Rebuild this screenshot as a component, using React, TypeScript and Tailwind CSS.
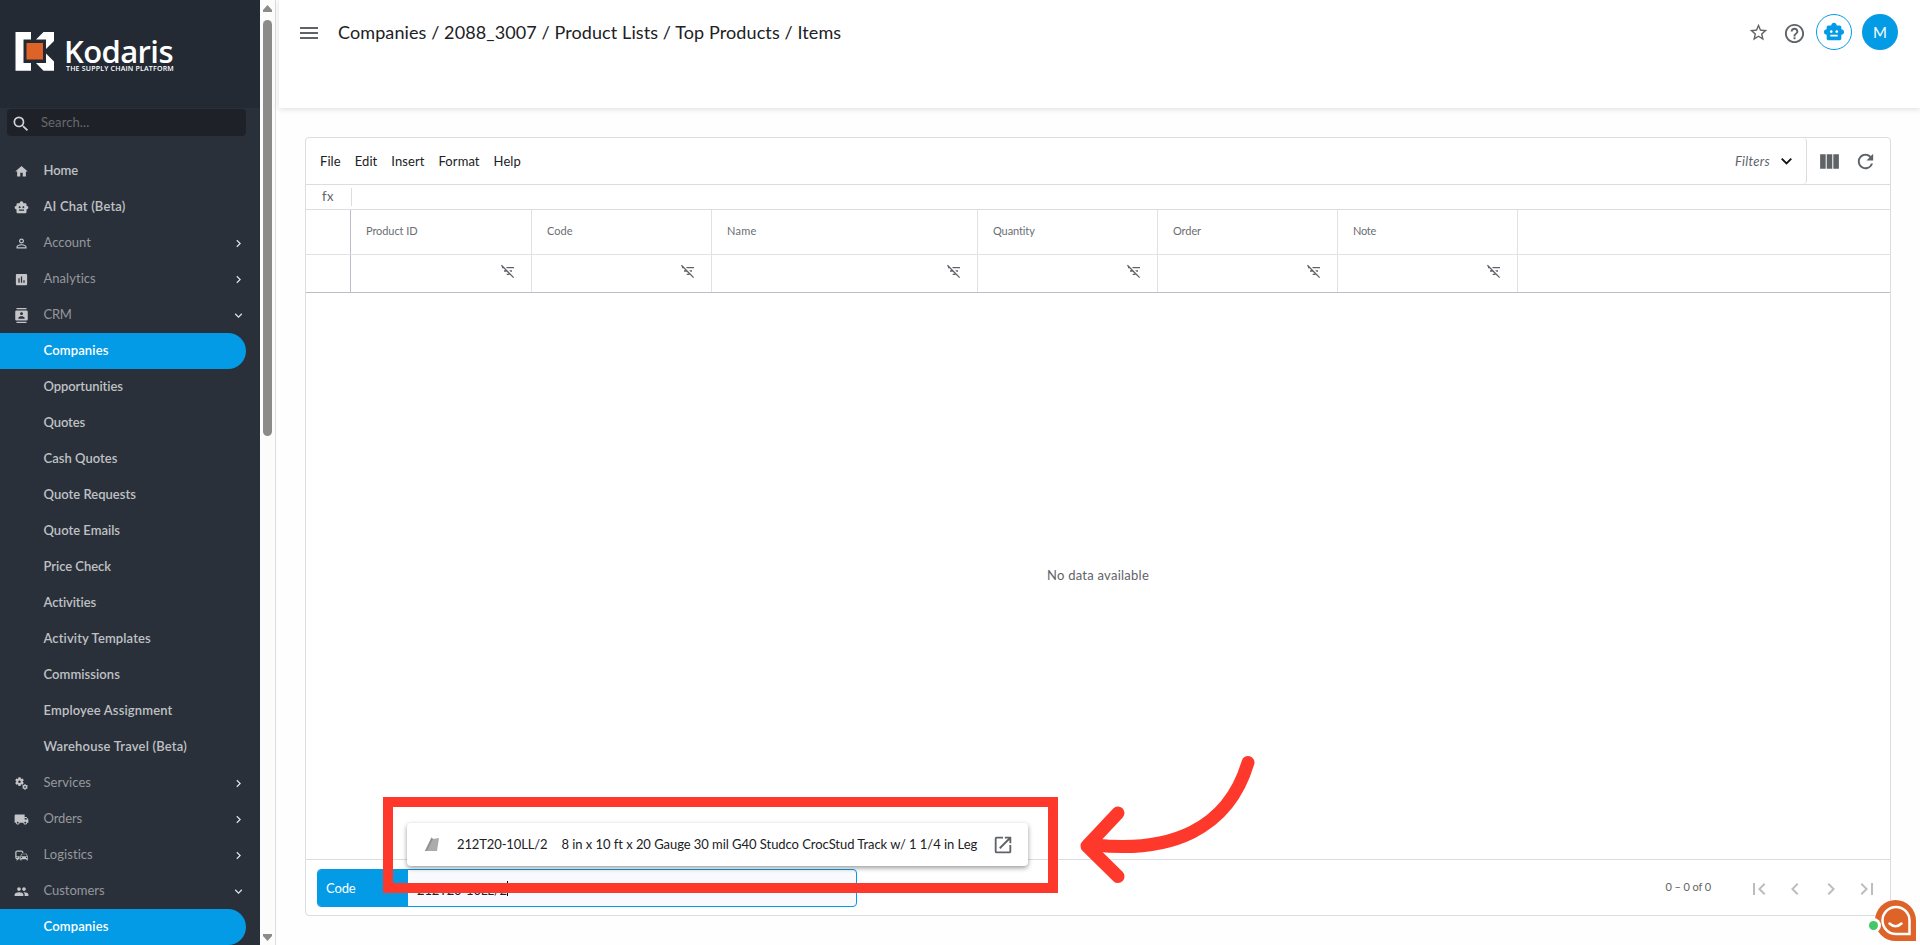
import type { IconType } from 'react-icons';
import {
  MdAssessment,
  MdChevronLeft,
  MdChevronRight,
  MdCommute,
  MdContacts,
  MdExpandMore,
  MdFilterListOff,
  MdFirstPage,
  MdHelpOutline,
  MdHome,
  MdLastPage,
  MdLocalShipping,
  MdMenu,
  MdMiscellaneousServices,
  MdOpenInNew,
  MdPeople,
  MdPersonOutline,
  MdRefresh,
  MdSearch,
  MdSmartToy,
  MdStarBorder,
  MdViewColumn,
} from 'react-icons/md';
import clsx from 'clsx';

type NavItem = {
  label: string;
  tracking?: string;
  icon?: IconType;
  group?: 'open' | 'closed';
  active?: boolean;
};

const navItems: NavItem[] = [
  { label: 'Home', icon: MdHome, tracking: 'tracking-[-0.1px]' },
  { label: 'AI Chat (Beta)', icon: MdSmartToy, tracking: 'tracking-[0.17px]' },
  { label: 'Account', icon: MdPersonOutline, group: 'closed', tracking: 'tracking-[0.04px]' },
  { label: 'Analytics', icon: MdAssessment, group: 'closed', tracking: 'tracking-[0.04px]' },
  { label: 'CRM', icon: MdContacts, group: 'open', tracking: 'tracking-[-0.3px]' },
  { label: 'Companies', active: true, tracking: 'tracking-[0.15px]' },
  { label: 'Opportunities', tracking: 'tracking-[-0.08px]' },
  { label: 'Quotes', tracking: 'tracking-[-0.13px]' },
  { label: 'Cash Quotes', tracking: 'tracking-[0.03px]' },
  { label: 'Quote Requests', tracking: 'tracking-[0.02px]' },
  { label: 'Quote Emails' },
  { label: 'Price Check', tracking: 'tracking-[-0.04px]' },
  { label: 'Activities', tracking: 'tracking-[-0.1px]' },
  { label: 'Activity Templates', tracking: 'tracking-[0.12px]' },
  { label: 'Commissions', tracking: 'tracking-[0.07px]' },
  { label: 'Employee Assignment', tracking: 'tracking-[0.14px]' },
  { label: 'Warehouse Travel (Beta)', tracking: 'tracking-[0.2px]' },
  { label: 'Services', icon: MdMiscellaneousServices, group: 'closed', tracking: 'tracking-[0.06px]' },
  { label: 'Orders', icon: MdLocalShipping, group: 'closed', tracking: 'tracking-[-0.12px]' },
  { label: 'Logistics', icon: MdCommute, group: 'closed', tracking: 'tracking-[0.07px]' },
  { label: 'Customers', icon: MdPeople, group: 'open', tracking: 'tracking-[-0.04px]' },
  { label: 'Companies', active: true, tracking: 'tracking-[0.15px]' },
];

const columns = [
  { label: 'Product ID', width: 'w-[181px] pl-[15px]', tracking: 'tracking-[-0.08px]' },
  { label: 'Code', width: 'w-[180px] pl-[15px]', tracking: '' },
  { label: 'Name', width: 'w-[266px] pl-[15px]', tracking: 'tracking-[0.23px]' },
  { label: 'Quantity', width: 'w-[180px] pl-[15px]', tracking: 'tracking-[-0.1px]' },
  { label: 'Order', width: 'w-[180px] pl-[15px]', tracking: 'tracking-[-0.09px]' },
  { label: 'Note', width: 'w-[180px] pl-[15px]', tracking: 'tracking-[-0.25px]' },
];

const menus = ['File', 'Edit', 'Insert', 'Format', 'Help'];

const Logo = () => (
  <div className="flex h-[108px] shrink-0 items-start bg-[#232a34] pl-[15px] pt-8">
    <svg width="40" height="40" viewBox="0 0 40 40" className="shrink-0">
      <path fill="#fff" d="M0.500 0H16V7.500H8.500V31H16V38.700H0.500Z" />
      <path fill="#fff" d="M21 7.500L28.500 0H39V9L31 17V7.500ZM31 21.500L39 29.500V38.700H28.500L21 31H31Z" />
      <rect x="11.500" y="11" width="16.500" height="16.500" fill="#dd6329" />
    </svg>
    <div className="ml-[9px] flex flex-col text-white">
      <span className="mt-px h-[33px] self-start font-['Open_Sans',sans-serif] text-[31px] font-semibold leading-[37px] tracking-[-0.6px]">
        Kodaris
      </span>
      <span className="-mt-px ml-[2px] self-start whitespace-nowrap font-['Open_Sans',sans-serif] text-[7px] font-semibold leading-[8px] tracking-[0.2px]">
        THE SUPPLY CHAIN PLATFORM
      </span>
    </div>
  </div>
);

const Sidebar = () => (
  <aside className="flex w-[260px] shrink-0 flex-col bg-[#2a303a]">
    <Logo />
    <div className="mb-[17px] ml-[7px] mt-px flex h-[27px] w-[239px] shrink-0 items-center rounded bg-[#1e2228] pl-1">
      <MdSearch className="mt-[3px] size-5 text-[#d0d1d3]" />
      <span className="ml-[10px] text-[13px] tracking-[0.1px] text-[#66696e]">Search...</span>
    </div>
    {navItems.map(({ label, icon: Icon, group, active, tracking }, i) => (
      <div
        key={i}
        className={clsx(
          'flex h-9 w-[246px] shrink-0 items-center text-[13px]',
          active && 'rounded-r-full bg-[#039be5]',
        )}
      >
        <div className="flex w-[43.5px] shrink-0 pl-[14px]">
          {Icon && <Icon className="size-[15px] text-[#c3c5c8]" />}
        </div>
        <span
          className={clsx(
            tracking,
            active ? 'font-semibold text-white' : group ? 'text-[#95989c]' : 'font-semibold text-[#bfc1c4]',
          )}
        >
          {label}
        </span>
        {group === 'closed' && <MdChevronRight className="ml-auto size-[15px] text-[#dfe0e1]" />}
        {group === 'open' && <MdExpandMore className="ml-auto size-[15px] text-[#dfe0e1]" />}
      </div>
    ))}
  </aside>
);

const Scrollbar = () => (
  <div className="flex w-4 shrink-0 flex-col items-center border-r border-[#ddd] bg-[#fcfcfc]">
    <svg width="9" height="7" className="mt-[5px] shrink-0" viewBox="0 0 9 7">
      <path d="M4.500 0L9 5V7H0V5Z" fill="#8b8b8b" />
    </svg>
    <div className="mt-2 h-[416px] w-[9px] rounded-full bg-[#8b8b8b]" />
    <svg width="9" height="7" className="mb-1 mt-auto shrink-0" viewBox="0 0 9 7">
      <path d="M4.500 7L9 2V0H0V2Z" fill="#8b8b8b" />
    </svg>
  </div>
);

const Header = () => (
  <header className="flex h-[108px] shrink-0 items-start bg-white pl-[18px] pr-[22px] pt-[14px] shadow-[0_1px_6px_rgba(0,0,0,0.14)]">
    <MdMenu className="mt-[7px] size-6 text-[#5f6368]" />
    <h1 className="ml-[17px] mt-[5px] text-[18px] leading-[27px] tracking-[0.1px] text-[#202124]">
      Companies / 2088_3007 / Product Lists / Top Products / Items
    </h1>
    <div className="ml-auto flex items-center">
      <MdStarBorder className="mt-px size-[21px] text-[#5f6368]" />
      <MdHelpOutline className="ml-[14px] mt-[2px] size-[23px] text-[#5f6368]" />
      <div className="ml-[10px] flex size-9 items-center justify-center rounded-full border border-[#039be5]">
        <MdSmartToy className="-mt-px size-[22px] text-[#039be5]" />
      </div>
      <div className="ml-[10px] flex size-9 items-center justify-center rounded-full bg-[#039be5] pt-px text-[15px] text-white">
        M
      </div>
    </div>
  </header>
);

const Toolbar = () => (
  <div className="flex h-[47px] shrink-0 border-b border-[#ddd] text-[13px]">
    <div className="flex flex-1 items-center gap-[14px] rounded-r border-r border-[#ddd] pl-[14px] pr-[14px] pt-[2px] text-[#202124]">
      {menus.map((m) => (
        <span key={m} className="tracking-[0.08px]">
          {m}
        </span>
      ))}
      <div className="ml-auto flex items-center text-[#5f6368]">
        <span className="italic tracking-[0.28px]">Filters</span>
        <svg width="11" height="7" viewBox="0 0 11 7" className="-mt-[2px] ml-[11px]">
          <path d="M0.700 0.700L5.500 5.500L10.300 0.700" fill="none" stroke="#111" strokeWidth="1.800" />
        </svg>
      </div>
    </div>
    <div className="flex w-[83px] items-center pt-px text-[#5f6368]">
      <MdViewColumn className="ml-[10px] size-[25px]" />
      <MdRefresh className="ml-3 size-[23px]" />
    </div>
  </div>
);

const Grid = () => (
  <>
    <div className="flex h-[25px] shrink-0 border-b border-[#ddd]">
      <div className="mt-[3px] h-[18px] w-[46px] border-r border-[#ddd] pl-4 text-[13px] leading-[17px] tracking-[0.4px] text-[#5f6368]">
        fx
      </div>
    </div>
    <div className="flex h-[45px] shrink-0 border-b border-[#e2e2e2] text-[11px] text-[#6b6e73]">
      <div className="w-[45px] shrink-0 border-r border-[#babfc7]" />
      {columns.map((c) => (
        <div
          key={c.label}
          className={clsx('flex shrink-0 items-center border-r border-[#e2e2e2] pb-[2px]', c.width, c.tracking)}
        >
          {c.label}
        </div>
      ))}
    </div>
    <div className="flex h-[38px] shrink-0 border-b border-[#babfc7]">
      <div className="w-[45px] shrink-0 border-r border-[#babfc7]" />
      {columns.map((c) => (
        <div
          key={c.label}
          className={clsx('flex shrink-0 items-center justify-end border-r border-[#e2e2e2] pb-[5px] pr-[15px]', c.width)}
        >
          <MdFilterListOff className="size-4 text-[#5f6368]" />
        </div>
      ))}
    </div>
  </>
);

const Footer = () => (
  <div className="flex h-[56px] shrink-0 items-center border-t border-[#ddd] pl-[11px] pr-[11px]">
    <div className="flex h-[38px] w-[540px] overflow-hidden rounded border border-[#039be5] bg-[#f9fafd] text-[13px]">
      <div className="flex w-[90px] items-center bg-[#039be5] pl-2 pt-[2px] tracking-[-0.14px] text-white">Code</div>
      <div className="flex items-center pl-[9px] text-[#202124]">
        <span className="mt-[6px] tracking-[-0.16px]">212T20-10LL/2</span>
        <span className="mt-[2px] h-[15px] w-px bg-black" />
      </div>
    </div>
    <div className="ml-auto flex items-center">
      <span className="mr-[36px] pb-px text-[11px] tracking-[-0.11px] text-[#5f6368]">0 – 0 of 0</span>
      <div className="flex gap-3 pt-[3px] text-[#bdbdbd]">
        <MdFirstPage className="size-6" />
        <MdChevronLeft className="size-6" />
        <MdChevronRight className="size-6" />
        <MdLastPage className="size-6" />
      </div>
    </div>
  </div>
);

const Suggestion = () => (
  <div className="absolute left-[407px] top-[823px] flex h-[43px] w-[621px] items-center rounded bg-white text-[13px] text-[#202124] shadow-[0_2px_5px_rgba(0,0,0,0.4)]">
    <svg width="15" height="15" viewBox="0 0 15 15" className="-mt-px ml-[18px] shrink-0">
      <path d="M0 14L6.500 0.500L8 2L14 1L12 14Z" fill="#a9abad" />
      <path d="M6.500 0.500L8 2L2 14H0Z" fill="#8f9193" />
    </svg>
    <span className="ml-[17px] tracking-[-0.12px]">212T20-10LL/2</span>
    <span className="ml-[14px] whitespace-nowrap tracking-[-0.05px]">
      8 in x 10 ft x 20 Gauge 30 mil G40 Studco CrocStud Track w/ 1 1/4 in Leg
    </span>
    <MdOpenInNew className="ml-auto mr-[14px] size-[22px] text-[#5f6368]" />
  </div>
);

const Callout = () => (
  <>
    <div className="absolute left-[383px] top-[797px] h-[96px] w-[675px] border-[10px] border-[#ff382c]" />
    <svg
      className="absolute left-[1070px] top-[750px]"
      width="190"
      height="140"
      viewBox="1070 750 190 140"
      fill="none"
      stroke="#ff382c"
      strokeWidth="13"
      strokeLinecap="round"
      strokeLinejoin="round"
    >
      <path d="M1248 762.500C1228 830 1170 853 1095 845" />
      <path d="M1118 813L1087 846L1118 876.500" />
    </svg>
  </>
);

const ChatButton = () => (
  <svg className="absolute left-[1866px] top-[898px]" width="52" height="46" viewBox="1866 898 52 46">
    <path d="M1895.500 900A20.500 20.500 0 0 0 1895.500 941H1916V920.500A20.500 20.500 0 0 0 1895.500 900Z" fill="#dd6329" />
    <path
      d="M1896 907A13.500 13.500 0 0 0 1896 934H1909.500V920.500A13.500 13.500 0 0 0 1896 907Z"
      fill="none"
      stroke="#fff"
      strokeWidth="2.500"
    />
    <path d="M1889.500 923.500Q1895.500 929 1901.500 923.500" fill="none" stroke="#fff" strokeWidth="2.500" strokeLinecap="round" />
    <circle cx="1873.500" cy="925.500" r="7.500" fill="#fff" />
    <circle cx="1873.500" cy="925.500" r="4.500" fill="#44c767" />
  </svg>
);

export default function App() {
  return (
    <div className="relative flex h-[945px] w-full overflow-hidden bg-[#fefefe] font-[Lato,sans-serif]">
      <Sidebar />
      <Scrollbar />
      <main className="flex min-w-0 flex-1 flex-col pl-[3px]">
        <Header />
        <section className="ml-[26px] mr-[29px] mt-[29px] flex h-[779px] flex-col rounded border border-[#ddd] bg-white">
          <Toolbar />
          <Grid />
          <div className="flex flex-1 items-center justify-center text-[13px] tracking-[0.25px] text-[#5f6368]">
            No data available
          </div>
          <Footer />
        </section>
      </main>
      <Suggestion />
      <Callout />
      <ChatButton />
    </div>
  );
}
